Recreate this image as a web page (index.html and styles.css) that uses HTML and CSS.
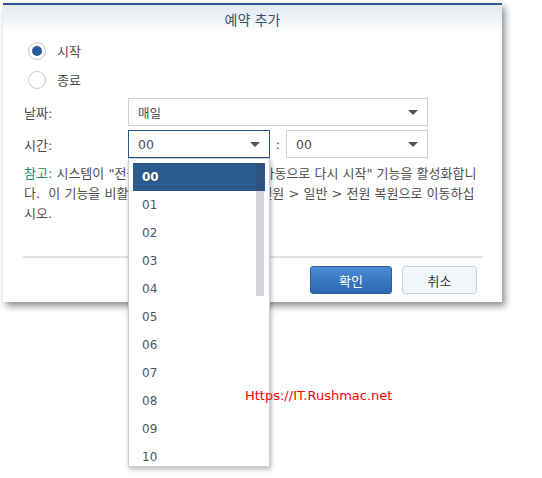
FILE: index.html
```html
<!DOCTYPE html>
<html lang="ko">

<head>
  <meta charset="UTF-8">
  <meta name="viewport" content="width=device-width, initial-scale=1.0">
  <title>예약 추가</title>
  <link rel="stylesheet" href="styles.css">
</head>

<body>
  <div class="dialog">
    <div class="dialog-header">예약 추가</div>

    <div class="dialog-body">
      <label class="radio checked"><span class="radio-mark"></span>시작</label>
      <label class="radio"><span class="radio-mark"></span>종료</label>

      <div class="form-row">
        <span class="form-label">날짜:</span>
        <div class="select wide"><span>매일</span><i class="arrow"></i></div>
      </div>

      <div class="form-row">
        <span class="form-label">시간:</span>
        <div class="time-field">
          <div class="select half focus"><span>00</span><i class="arrow"></i></div>
          <!-- open hour list -->
          <div class="dropdown">
            <ul>
              <li class="selected">00</li>
              <li>01</li>
              <li>02</li>
              <li>03</li>
              <li>04</li>
              <li>05</li>
              <li>06</li>
              <li>07</li>
              <li>08</li>
              <li>09</li>
              <li>10</li>
            </ul>
            <div class="scroll-thumb"></div>
          </div>
        </div>
        <span class="sep">:</span>
        <div class="select half"><span>00</span><i class="arrow"></i></div>
      </div>

      <p class="note"><b>참고:</b> 시스템이 "전원 공급 문제가 해결되면 자동으로 다시 시작" 기능을 활성화합니다.&nbsp; 이 기능을 비활성화하려면 하드웨어 및 전원 &gt; 일반 &gt; 전원 복원으로 이동하십시오.</p>
    </div>

    <div class="dialog-footer">
      <button class="btn primary">확인</button>
      <button class="btn">취소</button>
    </div>
  </div>

  <div class="watermark">Https://IT.Rushmac.net</div>
</body>

</html>
```

FILE: styles.css
```css
body {
  margin: 0;
  min-height: 478px;
  background-color: #ffffff;
  font-family: 'DejaVu Sans', 'Noto Sans CJK KR', sans-serif;
  font-size: 13px;
  color: #474747;
}

.dialog {
  width: 499px;
  margin: 3px 0 0 3px;
  background-color: #ffffff;
  border-top: 2px solid #2b5a8e;
  box-shadow: 3px 4px 7px rgba(0, 0, 0, 0.45);
}

.dialog-header {
  height: 30px;
  line-height: 30px;
  text-align: center;
  font-size: 14px;
  color: #34506f;
  background: linear-gradient(#e3e9f1, #ffffff);
}

.dialog-body {
  padding: 1px 0 0 21px;
}

/* radio buttons */
.radio {
  display: flex;
  align-items: center;
  height: 29px;
  color: #4a4a4a;
}

.radio-mark {
  width: 16px;
  height: 16px;
  margin: 0 11px 0 4px;
  border: 1px solid #c3ccd7;
  border-radius: 50%;
  display: flex;
  align-items: center;
  justify-content: center;
}

.radio.checked .radio-mark::after {
  content: '';
  width: 10px;
  height: 10px;
  border-radius: 50%;
  background-color: #2b5b97;
}

/* form rows */
.form-row {
  display: flex;
  align-items: center;
  margin-top: 4px;
}

.form-label {
  width: 104px;
  color: #4a4a4a;
}

.select {
  box-sizing: border-box;
  height: 28px;
  border: 1px solid #c9d3de;
  display: flex;
  align-items: center;
  justify-content: space-between;
  padding: 0 9px 0 9px;
  font-size: 12.5px;
  color: #4c4c4c;
  background-color: #ffffff;
}

.select.wide {
  width: 300px;
}

.select.half {
  width: 142px;
}

.select.focus {
  border-color: #2b5a8e;
}

.arrow {
  width: 0;
  height: 0;
  border-left: 5px solid transparent;
  border-right: 5px solid transparent;
  border-top: 5px solid #4e5864;
}

.sep {
  width: 16px;
  text-align: center;
  color: #4a4a4a;
}

.time-field {
  position: relative;
}

.dropdown {
  position: absolute;
  top: 28px;
  left: 0;
  z-index: 2;
  box-sizing: border-box;
  width: 142px;
  height: 309px;
  padding: 4px;
  border: 1px solid #c6ced9;
  background-color: #ffffff;
  box-shadow: 1px 2px 5px rgba(0, 0, 0, 0.3);
  overflow: hidden;
}

.dropdown ul {
  list-style: none;
  margin: 0;
  padding: 0;
}

.dropdown li {
  height: 28px;
  line-height: 28px;
  padding-left: 9px;
  font-size: 12px;
  color: #4b5662;
}

.dropdown li.selected {
  background-color: #2b5a8e;
  color: #ffffff;
  font-weight: bold;
}

.scroll-thumb {
  position: absolute;
  top: 4px;
  right: 5px;
  width: 8px;
  height: 133px;
  background-color: rgba(60, 60, 80, 0.22);
}

.note {
  margin: 6px 0 0 0;
  width: 456px;
  line-height: 20px;
  color: #505050;
}

.note b {
  font-weight: normal;
  color: #14906e;
}

/* footer */
.dialog-footer {
  display: flex;
  justify-content: flex-end;
  gap: 10px;
  margin: 32px 19px 0 20px;
  padding: 8px 6px 8px 0;
  border-top: 2px solid #e4e4e4;
}

.btn {
  height: 28px;
  width: 75px;
  border: 1px solid #c6d2df;
  border-radius: 3px;
  background-color: #f2f6fa;
  color: #3a3a3a;
  font-family: 'DejaVu Sans', 'Noto Sans CJK KR', sans-serif;
  font-size: 13px;
}

.btn.primary {
  width: 82px;
  border-color: #2a5c9e;
  background: linear-gradient(#4b8bd6, #2b66b1);
  color: #ffffff;
}

/* stamped over the screenshot, above the open list */
.watermark {
  position: relative;
  z-index: 3;
  margin-top: 86px;
  padding-left: 245px;
  font-size: 13px;
  color: #ff0000;
}
```
